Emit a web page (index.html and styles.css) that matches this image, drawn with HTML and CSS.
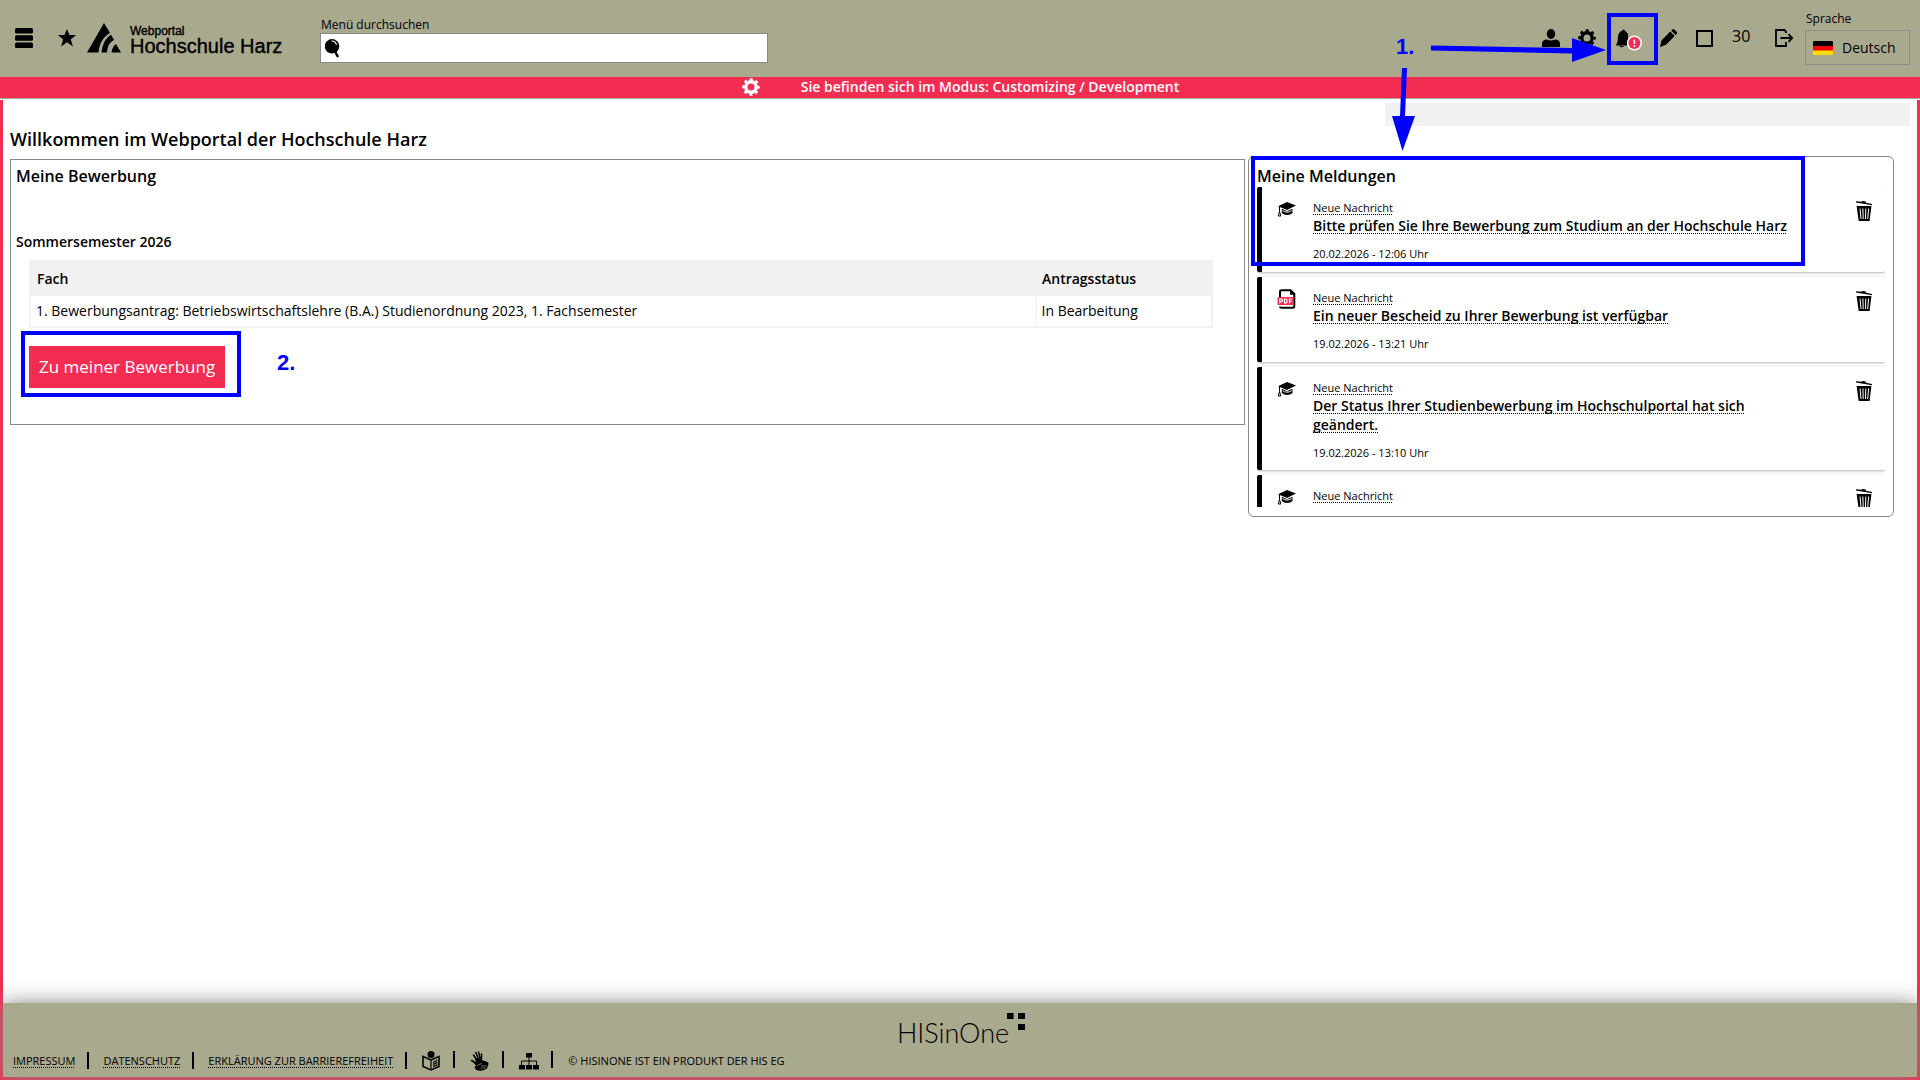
FILE: index.html
```html
<!DOCTYPE html>
<html lang="de">
<head>
<meta charset="utf-8">
<meta name="viewport" content="width=device-width, initial-scale=1">
<title>Webportal Hochschule Harz</title>
<link rel="stylesheet" href="styles.css">
</head>
<body>
<svg class="sprite" aria-hidden="true">
  <symbol id="i-cap" viewBox="0 0 19 15">
    <path d="M10 0 19 3.600 10 8 1 4.200z"/>
    <path d="M4.800 6.800 10 9.300 15.500 6.800V11c-2.600 2.600-8 2.600-10.700 0z"/>
    <path d="M5.500 8.600c2.500 2 6.500 2 9.300 0" fill="none" stroke="#fff" stroke-width="1"/>
    <path d="M2.500 5v4.500M2.500 9.500 1.200 14h2.600z" fill="none" stroke="#000" stroke-width="1"/>
  </symbol>
  <symbol id="i-pdf" viewBox="0 0 18 20">
    <path d="M2.500 8V2.500Q2.500 1.200 4 1.200H13L16.800 5V17.500Q16.800 18.800 15.300 18.800H4Q2.500 18.800 2.500 17.500" fill="none" stroke="#000" stroke-width="2"/>
    <path d="M12.500 1v4.800h5z"/>
    <rect x="0" y="8" width="16" height="8" rx="1" fill="#f22d51"/>
    <g fill="none" stroke="#fff" stroke-width="1.200"><path d="M2.300 14.500V10h1.500a1.300 1.300 0 0 1 0 2.600H2.300M7 10v4h.8c2.400 0 2.400-4 0-4zM12 14.500V10h2.500M12 12.300h2"/></g>
  </symbol>
  <symbol id="i-trash" viewBox="0 0 16 20">
    <path d="M0 .3 5.500 .8 6 0 9.800 .6 10 1.700 16 3V4.300L0 1.500z"/>
    <path d="M.6 5H15.400L13.600 20H2.700z"/>
    <path d="M4 7.500 5 18M6.900 7.500 7.200 18M9.800 7.500 9.500 18M12.600 7.500 11.700 18" stroke="#fff" stroke-width="1" fill="none"/>
  </symbol>
  <symbol id="i-gear" viewBox="0 0 18 18">
    <circle cx="9" cy="9" r="5.200" fill="none" stroke="currentColor" stroke-width="3.400"/>
    <circle cx="9" cy="9" r="7.500" fill="none" stroke="currentColor" stroke-width="2.600" stroke-dasharray="3 2.890" stroke-dashoffset="1.500"/>
  </symbol>
</svg>

<header class="topbar">
  <button class="icon-button burger" aria-label="Menü"><svg width="18" height="20" viewBox="0 0 18 20"><rect width="18" height="5.600" rx="1.500"/><rect y="7.200" width="18" height="5.600" rx="1.500"/><rect y="14.400" width="18" height="5.600" rx="1.500"/></svg></button>
  <button class="icon-button favorite" aria-label="Favoriten"><svg width="18" height="18" viewBox="0 0 18 18"><path d="M9 0 11.500 6H18L12.800 10.400 14.900 17.400 9 13.300 3.100 17.400 5.200 10.400 0 6H6.500z"/></svg></button>
  <a class="brand" href="#">
    <svg width="34" height="30" viewBox="0 0 34 30"><path d="M17 0 23 10C16 14 12.500 20 11.500 29.500H0zM24 11.700 27 17C22.500 19.500 20.500 23 20 29.500H14.500C15.500 21.500 18 15.500 24 11.700zM29 21 34 29.500H24.500C25 25.500 26.500 22.700 29 21z"/></svg>
    <span class="brand-text"><span class="brand-small">Webportal</span><span class="brand-large">Hochschule Harz</span></span>
  </a>
  <form class="search" role="search">
    <label for="menu-search">Menü durchsuchen</label>
    <span class="search-box">
      <svg width="15" height="19" viewBox="0 0 15 19"><circle cx="7" cy="7.300" r="7.200"/><path d="M10 12.500 13 18" stroke="#000" stroke-width="2.400"/><path d="M6.500 2q4-.3 5 3.800" stroke="#fff" fill="none" stroke-width="1.200"/></svg>
      <input id="menu-search" type="text">
    </span>
  </form>
  <nav class="tools" aria-label="Werkzeuge">
    <button class="icon-button" aria-label="Benutzer"><svg width="18" height="18" viewBox="0 0 18 18"><ellipse cx="9" cy="5" rx="4.200" ry="5"/><path d="M0 18v-3q0-4.500 5-4.500 4 2 8 0 5 0 5 4.500v3z"/></svg></button>
    <button class="icon-button" aria-label="Einstellungen"><svg width="18" height="18"><use href="#i-gear"/></svg></button>
    <span class="notify">
      <button class="icon-button" aria-label="Meldungen"><svg width="28" height="22" viewBox="0 0 28 22"><path d="M8.500 1.500Q9 0 10.500 1L11 2Q14.500 3.500 14 8T16.500 16.500L2 16.500Q4 13 4 8T8.500 1.500zM5 17h5q-2 2.500-5 0z"/><circle cx="20.400" cy="14" r="7.600" fill="#fff"/><circle cx="20.400" cy="14" r="6" fill="#f22d51"/><path d="M20.400 10.500v4.500M20.400 16.300v1.800" stroke="#fff" stroke-width="1.600"/></svg></button>
      <span class="mark mark-bell"></span>
    </span>
    <button class="icon-button" aria-label="Bearbeiten"><svg width="18" height="18" viewBox="0 0 18 18"><path d="M1.500 11.500 10.200 2.600 14.700 6.900 6 15.800 0 18zM11.200 1.600 12.500.4Q13.300-.3 14.300.6L16.800 3Q17.600 4 16.800 4.700L15.600 5.900z"/></svg></button>
    <button class="icon-button" aria-label="Vollbild"><svg width="18" height="18" viewBox="0 0 18 18"><rect x="1" y="2" width="15" height="15" fill="none" stroke="#000" stroke-width="2"/></svg></button>
    <span class="timer">30</span>
    <button class="icon-button logout" aria-label="Abmelden"><svg width="18" height="18" viewBox="0 0 18 18"><path d="M11 4V2.500L9.500 1H1V17H11V13M5.500 9H17M13.500 5.200 17.200 9 13.500 12.800" fill="none" stroke="#000" stroke-width="1.800"/></svg></button>
    <div class="language">
      <label for="lang">Sprache</label>
      <span class="language-box">
        <svg width="20" height="14" viewBox="0 0 20 14"><rect width="20" height="14" rx="1" fill="#fd0"/><path d="M0 5h20v4.500H0z" fill="#f00"/><path d="M0 1q0-1 1-1h18q1 0 1 1v4H0z"/></svg>
        <select id="lang"><option>Deutsch</option></select>
      </span>
    </div>
  </nav>
</header>
<div class="mode-banner"><svg width="18" height="18"><use href="#i-gear"/></svg><span>Sie befinden sich im Modus: Customizing / Development</span></div>

<div class="page">
  <main class="content">
    <div class="toolbar-strip"></div>
    <h1>Willkommen im Webportal der Hochschule Harz</h1>
    <div class="columns">
      <section class="panel application">
        <h2>Meine Bewerbung</h2>
        <h3>Sommersemester 2026</h3>
        <table>
          <thead><tr><th>Fach</th><th class="status">Antragsstatus</th></tr></thead>
          <tbody><tr><td>1. Bewerbungsantrag: Betriebswirtschaftslehre (B.A.) Studienordnung 2023, 1. Fachsemester</td><td>In Bearbeitung</td></tr></tbody>
        </table>
        <div class="action">
          <button class="primary">Zu meiner Bewerbung</button>
          <span class="mark mark-action"></span>
          <span class="step step-two">2.</span>
        </div>
      </section>
      <section class="panel messages">
        <h2>Meine Meldungen</h2>
        <ul class="message-list">
          <li><svg class="kind" width="19" height="15"><use href="#i-cap"/></svg><div class="message"><a class="tag" href="#">Neue Nachricht</a><a class="subject" href="#">Bitte prüfen Sie Ihre Bewerbung zum Studium an der Hochschule Harz</a><time>20.02.2026 - 12:06 Uhr</time></div><button class="icon-button" aria-label="Löschen"><svg width="16" height="20"><use href="#i-trash"/></svg></button></li>
          <li><svg class="kind document" width="19" height="20"><use href="#i-pdf"/></svg><div class="message"><a class="tag" href="#">Neue Nachricht</a><a class="subject" href="#">Ein neuer Bescheid zu Ihrer Bewerbung ist verfügbar</a><time>19.02.2026 - 13:21 Uhr</time></div><button class="icon-button" aria-label="Löschen"><svg width="16" height="20"><use href="#i-trash"/></svg></button></li>
          <li><svg class="kind" width="19" height="15"><use href="#i-cap"/></svg><div class="message"><a class="tag" href="#">Neue Nachricht</a><a class="subject" href="#">Der Status Ihrer Studienbewerbung im Hochschulportal hat sich geändert.</a><time>19.02.2026 - 13:10 Uhr</time></div><button class="icon-button" aria-label="Löschen"><svg width="16" height="20"><use href="#i-trash"/></svg></button></li>
          <li><svg class="kind" width="19" height="15"><use href="#i-cap"/></svg><div class="message"><a class="tag" href="#">Neue Nachricht</a></div><button class="icon-button" aria-label="Löschen"><svg width="16" height="20"><use href="#i-trash"/></svg></button></li>
        </ul>
        <span class="mark mark-message"></span>
      </section>
    </div>
  </main>
  <footer class="footer">
    <div class="product"><span>HISinOne</span><svg width="18" height="18" viewBox="0 0 18 18"><path d="M0 0h6.500v6H0zM11 0h7v6h-7zM11 11h7v6h-7z"/></svg></div>
    <div class="footer-links">
      <a href="#">IMPRESSUM</a>
      <a href="#">DATENSCHUTZ</a>
      <a href="#">ERKLÄRUNG ZUR BARRIEREFREIHEIT</a>
      <a class="symbol" href="#" aria-label="Leichte Sprache"><svg width="20" height="20" viewBox="0 0 20 20"><circle cx="10" cy="3.500" r="3.500"/><path d="M2 5.500 10 9 18 5.500V15.500L10 19 2 15.500z" fill="none" stroke="#000" stroke-width="1.600"/><path d="M10 9V19M12 11.200 16.500 9.200M12 13.400 16.500 11.400M12 15.600 16.500 13.600" stroke="#000" stroke-width="1.200"/></svg></a>
      <a class="symbol" href="#" aria-label="Gebärdensprache"><svg width="20" height="20" viewBox="0 0 20 20"><path d="M2 10 6 11 5 8 8 7 10.500 7 12 9 16 10.500Q19 11 18.500 13L17 17.500Q12 21 6 19L4.500 16 6 14.500z"/><path d="M1.500 9.500 6 12M3.500 4 7 9M5.800 1.500 8.500 8M8.500 1 10.200 7.500M11.500 3 11.500 8" stroke="#000" stroke-width="1.500" stroke-linecap="round"/><path d="M7 14.500 12 12.500M11 15h6M10.500 17h5" stroke="#a9a98e" stroke-width=".6"/></svg></a>
      <a class="symbol" href="#" aria-label="Sitemap"><svg width="20" height="20" viewBox="0 0 20 20"><path d="M7 2h6v4.500H7zM0 14h6v4.500H0zM7 14h6v4.500H7zM14 14h6v4.500h-6z"/><path d="M10 6v8M2.500 14V10h15v4" fill="none" stroke="#000"/></svg></a>
      <span>© HISINONE IST EIN PRODUKT DER HIS EG</span>
    </div>
  </footer>
</div>

<div class="callout" aria-hidden="true">
  <span class="step step-one">1.</span>
  <svg width="230" height="121" viewBox="0 0 230 121" fill="#00f"><path d="M44 15.500 185 18V8L219 20 185 32V23.500L44 20.500zM15 38h5L18 86H28L15.500 121 5 86H13z"/></svg>
</div>
</body>
</html>
```
FILE: styles.css
```css
* { box-sizing: border-box; }

body {
  margin: 0;
  min-height: 100vh;
  display: flex;
  flex-direction: column;
  position: relative;
  font: 14px/20px "Open Sans", "Noto Sans", sans-serif;
  color: #000;
  background: #fff;
}

h1, h2, h3, ul { margin: 0; padding: 0; font-weight: 600; }
a { color: inherit; }
svg { display: block; flex: none; }
.sprite { position: absolute; width: 0; height: 0; }

.icon-button {
  display: flex;
  padding: 0;
  border: 0;
  background: none;
  color: inherit;
  cursor: pointer;
}

/* Header */
.topbar {
  display: flex;
  align-items: flex-start;
  height: 77px;
  padding: 0 10px 0 15px;
  background: #a9a98e;
}
.burger { margin-top: 28px; }
.favorite { margin: 29px 11px 0 25px; }
.brand {
  display: flex;
  gap: 9px;
  width: 233px;
  padding-top: 23px;
  font-family: "Liberation Sans", Arial, sans-serif;
  text-decoration: none;
}
.brand-text { display: flex; flex-direction: column; white-space: nowrap; -webkit-text-stroke: 0.4px #000; }
.brand-small { font-size: 12px; line-height: 16px; }
.brand-large { font-size: 20px; line-height: 14px; }
.search { width: 448px; padding-top: 16px; }
.search label, .language label { display: block; font-size: 12px; line-height: 17px; }
.search label { padding-left: 1px; }
.search-box {
  display: flex;
  align-items: center;
  height: 30px;
  padding: 0 4px;
  border: 1px solid #888;
  background: #fff;
}
.search-box input { flex: 1; min-width: 0; border: 0; outline: 0; font: inherit; background: none; }
.tools { display: flex; align-items: flex-start; gap: 18px; margin-left: auto; padding-top: 29px; }
.notify { position: relative; }
.timer { width: 19px; font-size: 16px; line-height: 15px; }
.logout { margin-left: 6px; }
.language { width: 105px; margin: -19px 0 0 -6px; }
.language label { padding-left: 1px; }
.language-box {
  display: flex;
  align-items: center;
  height: 35px;
  margin-top: 3px;
  padding-left: 7px;
  border: 1px solid #8e8e8a;
}
.language select {
  flex: 1;
  min-width: 0;
  padding: 0 0 0 9px;
  border: 0;
  appearance: none;
  background: none;
  font: 14px/20px "Open Sans", sans-serif;
  color: #000;
}
.mode-banner {
  display: flex;
  align-items: center;
  justify-content: center;
  gap: 41px;
  height: 22px;
  padding: 0 0 2px 1px;
  border-bottom: 1px solid #a9a98e;
  background: #f22d51;
  color: #fff;
  font-weight: 600;
}

/* Page body */
.page {
  flex: 1;
  display: flex;
  flex-direction: column;
  margin-top: 1px;
  border: 3px solid #f22d51;
  border-top: 0;
}
.content { flex: 1; padding: 3px 7px 40px; }
.toolbar-strip { width: 525px; height: 23px; margin-left: auto; background: #f1f1f1; }
h1 { font-size: 18px; line-height: 26px; padding-bottom: 4px; }
h2 { font-size: 16px; line-height: 24px; }
h3 { font-size: 14px; line-height: 20px; }
.columns {
  display: grid;
  grid-template-columns: minmax(0, 1235fr) minmax(0, 646fr);
  gap: 3px;
  align-items: start;
  padding-right: 16px;
}
.panel { border: 1px solid #888; }

.application { margin-top: 3px; padding: 4px 31px 36px 5px; }
.application h3 { padding: 44px 0 8px; }
.application table {
  width: calc(100% - 13px);
  margin-left: 13px;
  border: 2px solid #f1f1f1;
  border-collapse: collapse;
  text-align: left;
}
.application th { height: 35px; padding: 0 6px; background: #f1f1f1; font-weight: 600; }
.application td { height: 31px; padding: 0 5px; }
.application td + td { border-left: 1px solid #f1f1f1; }
.status { width: 176px; }
.action { position: relative; display: flex; margin: 18px 0 0 13px; }
.primary {
  height: 42px;
  padding: 0 10px;
  border: 0;
  background: #f22d51;
  color: #fff;
  font: 17px/24px "Open Sans", sans-serif;
}

.messages { position: relative; padding: 8px 8px 9px; border-radius: 6px; }
.message-list { height: 320px; overflow: hidden; list-style: none; font-weight: 400; }
.messages h2 { line-height: 22px; }
.message-list li {
  display: flex;
  align-items: flex-start;
  min-height: 85px;
  margin-bottom: 5px;
  padding: 14px 13px 9px 15px;
  border-left: 5px solid #000;
  border-radius: 2px;
  background: #fff;
  box-shadow: 0 1px 3px rgba(0, 0, 0, 0.3);
}
.kind { margin: 1px 17px 0 0; }
.document { margin-top: -2px; }
.message { flex: 1; padding-right: 50px; }
.message a { text-decoration: underline dotted 1px; text-underline-offset: 2px; text-decoration-skip-ink: none; }
.tag { display: block; font-size: 11px; line-height: 14px; }
.subject { display: block; font-size: 14px; line-height: 19px; margin-top: 1px; font-weight: 600; }
.message time { display: block; margin-top: 11px; font-size: 11px; line-height: 16px; }

/* Footer */
.footer {
  height: 74px;
  padding: 10px;
  background: #a9a98e;
  box-shadow: 0 0 20px #888;
}
.product { display: flex; justify-content: center; padding-left: 2px; }
.product span { font: 300 27px/34px Lato, "Open Sans", sans-serif; padding-top: 3px; }
.product svg { margin-left: -2px; }
.footer-links { display: flex; align-items: center; padding-top: 1px; font-size: 11px; line-height: 18px; }
.footer-links a { display: flex; text-decoration: underline dotted 1px; text-underline-offset: 2px; }
.footer-links a::after { content: ""; width: 2px; height: 17px; margin: 0 14px 0 12px; background: #000; }
.footer-links .symbol::after { margin: 0 15px 0 12px; }

/* Guide marks over the page */
.mark { position: absolute; border: 4px solid #00f; pointer-events: none; }
.mark-bell { left: -7px; top: -16px; width: 51px; height: 52px; }
.mark-action { left: -8px; top: -15px; width: 220px; height: 66px; }
.mark-message { left: 2px; top: -1px; width: 554px; height: 110px; }
.step { position: absolute; font: bold 22px/24px "Liberation Sans", Arial, sans-serif; color: #00f; }
.step-two { left: 248px; top: 5px; }
.callout { position: absolute; right: 303px; top: 30px; pointer-events: none; }
.step-one { left: 9px; top: 5px; }
```
